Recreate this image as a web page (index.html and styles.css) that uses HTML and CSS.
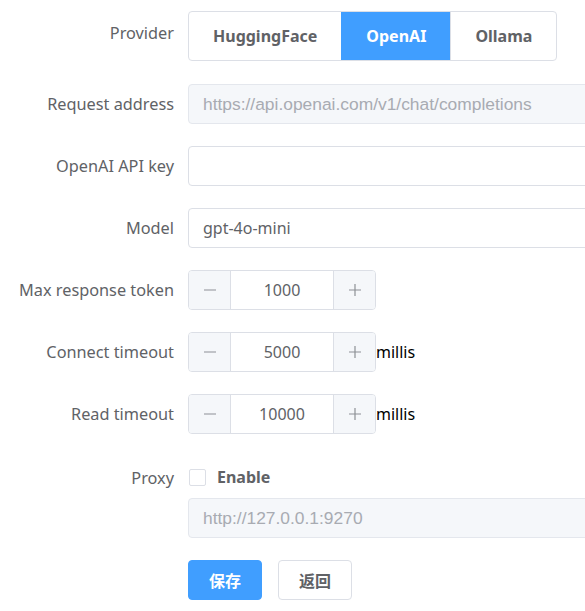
FILE: index.html
```html
<!DOCTYPE html>
<html>
<head>
<meta charset="utf-8">
<link rel="stylesheet" href="styles.css">
</head>
<body>
<form class="form">
  <div class="item item-provider">
    <label class="label">Provider</label>
    <div class="content">
      <div class="seg">
        <span class="seg-btn">HuggingFace</span>
        <span class="seg-btn active">OpenAI</span>
        <span class="seg-btn">Ollama</span>
      </div>
    </div>
  </div>
  <div class="item">
    <label class="label">Request address</label>
    <div class="content">
      <div class="input disabled"><span class="ph">https://api.openai.com/v1/chat/completions</span></div>
    </div>
  </div>
  <div class="item">
    <label class="label">OpenAI API key</label>
    <div class="content">
      <div class="input"></div>
    </div>
  </div>
  <div class="item">
    <label class="label">Model</label>
    <div class="content">
      <div class="input"><span class="val">gpt-4o-mini</span></div>
    </div>
  </div>
  <div class="item">
    <label class="label">Max response token</label>
    <div class="content">
      <div class="num">
        <span class="num-btn"><svg width="14" height="14" viewBox="0 0 14 14"><path d="M1 7h12" stroke="#8d9095" stroke-width="1.2"/></svg></span>
        <span class="num-val">1000</span>
        <span class="num-btn"><svg width="14" height="14" viewBox="0 0 14 14"><path d="M1 7h12M7 1v12" stroke="#8d9095" stroke-width="1.2"/></svg></span>
      </div>
    </div>
  </div>
  <div class="item">
    <label class="label">Connect timeout</label>
    <div class="content">
      <div class="num">
        <span class="num-btn"><svg width="14" height="14" viewBox="0 0 14 14"><path d="M1 7h12" stroke="#8d9095" stroke-width="1.2"/></svg></span>
        <span class="num-val">5000</span>
        <span class="num-btn"><svg width="14" height="14" viewBox="0 0 14 14"><path d="M1 7h12M7 1v12" stroke="#8d9095" stroke-width="1.2"/></svg></span>
      </div>
      <span class="unit">millis</span>
    </div>
  </div>
  <div class="item">
    <label class="label">Read timeout</label>
    <div class="content">
      <div class="num">
        <span class="num-btn"><svg width="14" height="14" viewBox="0 0 14 14"><path d="M1 7h12" stroke="#8d9095" stroke-width="1.2"/></svg></span>
        <span class="num-val">10000</span>
        <span class="num-btn"><svg width="14" height="14" viewBox="0 0 14 14"><path d="M1 7h12M7 1v12" stroke="#8d9095" stroke-width="1.2"/></svg></span>
      </div>
      <span class="unit">millis</span>
    </div>
  </div>
  <div class="item item-proxy">
    <label class="label">Proxy</label>
    <div class="content column">
      <div class="check-row">
        <span class="check"></span>
        <span class="check-label">Enable</span>
      </div>
      <div class="input disabled"><span class="ph">http://127.0.0.1:9270</span></div>
    </div>
  </div>
  <div class="item">
    <div class="label"></div>
    <div class="content buttons">
      <span class="btn primary">保存</span>
      <span class="btn">返回</span>
    </div>
  </div>
</form>
</body>
</html>
```
FILE: styles.css
```css
html, body {
  margin: 0;
  padding: 0;
  overflow: hidden;
  background: #fff;
}
body {
  padding: 11px 0 0 8px;
  font-family: "Noto Sans", "Noto Sans CJK SC", sans-serif;
  font-size: 16px;
  color: #606266;
}
.form {
  width: 700px;
}
.item {
  display: flex;
  margin-bottom: 22px;
}
.item-provider {
  margin-bottom: 23px;
}
.label {
  width: 180px;
  flex: none;
  box-sizing: border-box;
  padding-right: 14px;
  text-align: right;
  line-height: 41px;
  height: 40px;
  color: #606266;
  font-size: 16.3px;
}
.item-provider .label {
  line-height: 44px;
}
.item-proxy .label {
  line-height: 44px;
}
.content {
  display: flex;
  align-items: center;
  flex: 1;
  min-height: 40px;
}
.content.column {
  flex-direction: column;
  align-items: stretch;
}
.seg {
  display: flex;
  border: 1px solid #dcdfe6;
  border-radius: 4px;
  overflow: hidden;
  height: 48px;
}
.seg-btn {
  display: flex;
  align-items: center;
  padding: 0 24px;
  font-weight: 700;
  font-size: 16px;
  color: #606266;
}
.seg-btn + .seg-btn {
  border-left: 1px solid #dcdfe6;
}
.seg-btn.active {
  background: #409eff;
  color: #fff;
  border-color: #409eff;
}
.input {
  box-sizing: border-box;
  width: 500px;
  height: 40px;
  border: 1px solid #dcdfe6;
  border-radius: 4px;
  display: flex;
  align-items: center;
  padding: 0 14px;
  background: #fff;
}
.input.disabled {
  background: #f5f7fa;
  border-color: #e4e7ed;
}
.ph {
  font-family: "Liberation Sans", Arial, sans-serif;
  color: #a8abb2;
  font-size: 17.4px;
}
.val {
  color: #606266;
  font-size: 16px;
}
.num {
  display: flex;
  box-sizing: border-box;
  width: 188px;
  height: 40px;
  border: 1px solid #dcdfe6;
  border-radius: 4px;
  overflow: hidden;
}
.num-btn {
  width: 41px;
  flex: none;
  background: #f5f7fa;
  display: flex;
  align-items: center;
  justify-content: center;
}
.num-btn:first-child {
  border-right: 1px solid #dcdfe6;
}
.num-btn:last-child {
  border-left: 1px solid #dcdfe6;
}
.num-val {
  flex: 1;
  display: flex;
  align-items: center;
  justify-content: center;
  color: #606266;
}
.unit {
  color: #000;
  font-size: 16px;
}
.check-row {
  display: flex;
  align-items: center;
  height: 42px;
}
.check {
  box-sizing: border-box;
  width: 17px;
  height: 17px;
  border: 1px solid #dcdfe6;
  border-radius: 2px;
  margin-left: 1px;
  background: #fff;
}
.check-label {
  margin-left: 11px;
  font-weight: 700;
  color: #606266;
}
.buttons {
  gap: 16px;
}
.btn {
  box-sizing: border-box;
  height: 40px;
  display: flex;
  align-items: center;
  padding: 0 20px;
  border: 1px solid #dcdfe6;
  border-radius: 4px;
  font-weight: 700;
  color: #606266;
  background: #fff;
}
.btn.primary {
  background: #409eff;
  border-color: #409eff;
  color: #fff;
}
```
